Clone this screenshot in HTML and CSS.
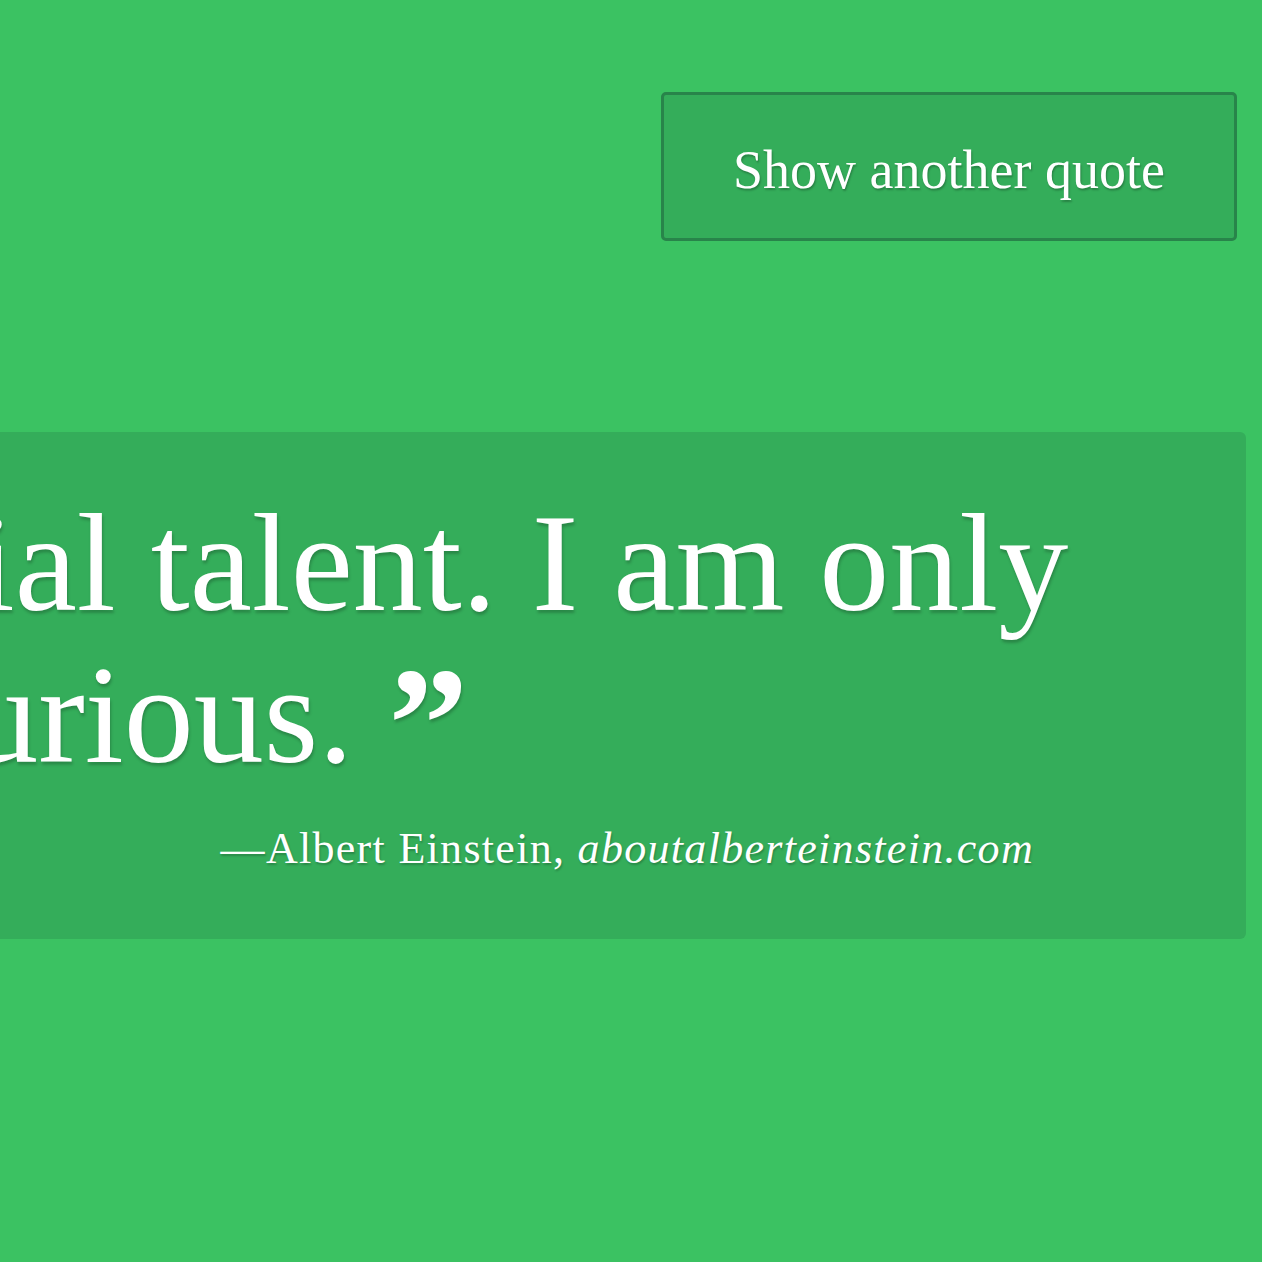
FILE: index.html
```html
<!DOCTYPE html>
<html lang="en">
<head>
<meta charset="utf-8">
<title>Random Quote</title>
<link rel="stylesheet" href="styles.css">
</head>
<body>
  <header class="top-bar">
    <button class="new-quote" type="button">Show another quote</button>
  </header>
  <main class="quote-card">
    <blockquote class="quote-text">
      <span class="quote-line">“ I have no special talent. I am only</span>
      <span class="quote-line quote-line-second">passionately curious. <span class="close-mark">”</span></span>
    </blockquote>
    <p class="quote-author">—Albert Einstein, <cite class="quote-source">aboutalberteinstein.com</cite></p>
  </main>
</body>
</html>
```
FILE: styles.css
```css
html, body {
  margin: 0;
  padding: 0;
}

body {
  background: #3bc262;
  font-family: "Liberation Serif", "Times New Roman", serif;
  color: #ffffff;
  overflow: hidden;
  height: 1262px;
}

.top-bar {
  display: flex;
  justify-content: flex-end;
  padding: 92px 25px 0 0;
}

.new-quote {
  font-family: "Liberation Serif", "Times New Roman", serif;
  font-size: 54px;
  line-height: 65px;
  color: #ffffff;
  background: #34ad5a;
  border: 3px solid #28844a;
  border-radius: 5px;
  padding: 43px 0 35px;
  width: 576px;
  text-align: center;
  text-shadow: 1px 2px 2px rgba(0, 0, 0, 0.25);
  cursor: pointer;
}

.quote-card {
  margin: 191px 16px 0 -986px;
  background: #34ad5a;
  border-radius: 6px;
  padding: 55px 60px 64px;
}

.quote-text {
  margin: 0;
  font-size: 140px;
  line-height: 152px;
  text-shadow: 1px 3px 3px rgba(0, 0, 0, 0.22);
}

.quote-line {
  display: block;
  white-space: nowrap;
}

.quote-line-second {
  padding-left: 105px;
}

.close-mark {
  font-size: 160px;
  line-height: 0;
  font-weight: bold;
  vertical-align: -16px;
}

.quote-author {
  margin: 31px 152px 0 0;
  text-align: right;
  font-size: 44px;
  line-height: 53px;
  letter-spacing: 1.3px;
  white-space: nowrap;
  text-shadow: 1px 2px 2px rgba(0, 0, 0, 0.22);
}

.quote-source {
  font-style: italic;
}
```
